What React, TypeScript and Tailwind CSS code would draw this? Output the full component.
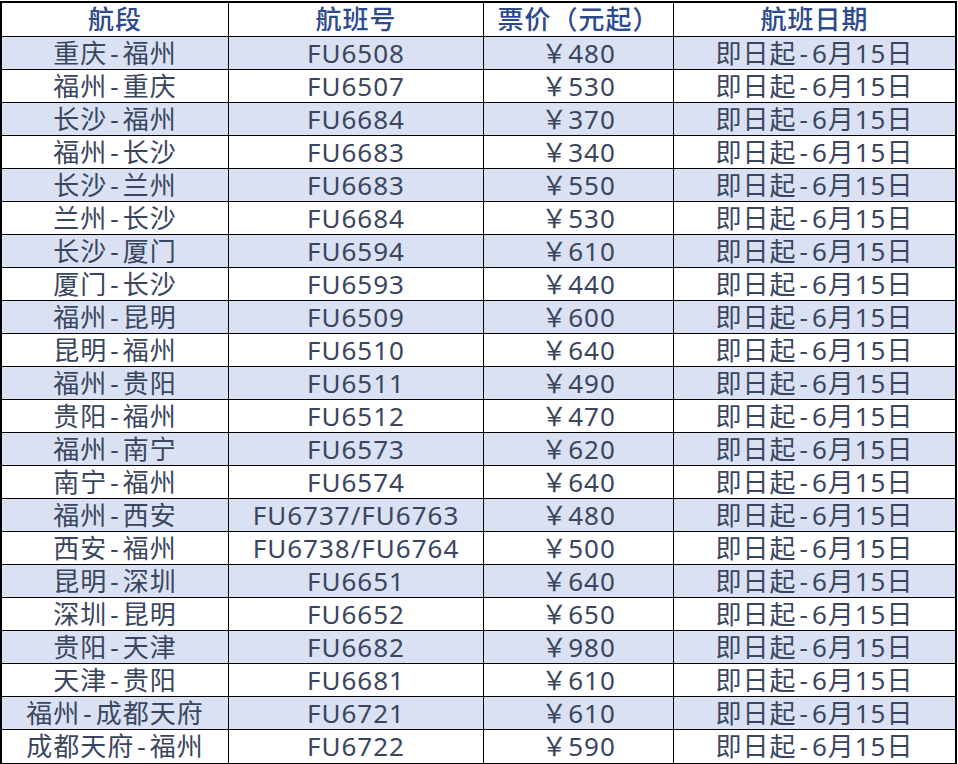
// Flight price table (Excel-style export)

type Row = { from: string; to: string; flight: string; price: string };

const rows: Row[] = [
  { from: '重庆', to: '福州', flight: 'FU6508', price: '480' },
  { from: '福州', to: '重庆', flight: 'FU6507', price: '530' },
  { from: '长沙', to: '福州', flight: 'FU6684', price: '370' },
  { from: '福州', to: '长沙', flight: 'FU6683', price: '340' },
  { from: '长沙', to: '兰州', flight: 'FU6683', price: '550' },
  { from: '兰州', to: '长沙', flight: 'FU6684', price: '530' },
  { from: '长沙', to: '厦门', flight: 'FU6594', price: '610' },
  { from: '厦门', to: '长沙', flight: 'FU6593', price: '440' },
  { from: '福州', to: '昆明', flight: 'FU6509', price: '600' },
  { from: '昆明', to: '福州', flight: 'FU6510', price: '640' },
  { from: '福州', to: '贵阳', flight: 'FU6511', price: '490' },
  { from: '贵阳', to: '福州', flight: 'FU6512', price: '470' },
  { from: '福州', to: '南宁', flight: 'FU6573', price: '620' },
  { from: '南宁', to: '福州', flight: 'FU6574', price: '640' },
  { from: '福州', to: '西安', flight: 'FU6737/FU6763', price: '480' },
  { from: '西安', to: '福州', flight: 'FU6738/FU6764', price: '500' },
  { from: '昆明', to: '深圳', flight: 'FU6651', price: '640' },
  { from: '深圳', to: '昆明', flight: 'FU6652', price: '650' },
  { from: '贵阳', to: '天津', flight: 'FU6682', price: '980' },
  { from: '天津', to: '贵阳', flight: 'FU6681', price: '610' },
  { from: '福州', to: '成都天府', flight: 'FU6721', price: '610' },
  { from: '成都天府', to: '福州', flight: 'FU6722', price: '590' },
];

const gridCols = 'grid grid-cols-[226px_255px_190px_282px]';

const Dash = () => <span className="mx-[3px]">-</span>;

export default function App() {
  return (
    <div
      className="bg-white pt-px text-[26px] tracking-[1px]"
      style={{ fontFamily: '"Noto Sans", "Noto Sans CJK SC", sans-serif' }}
    >
      <div className="w-[957px] border-2 border-black">
        {/* header */}
        <div className={`${gridCols} h-[34px] border-b border-black text-[#2c4a8e] font-medium leading-[33px]`}>
          <div className="text-center">航段</div>
          <div className="border-l border-black text-center">航班号</div>
          <div className="border-l border-black text-center">票价（元起）</div>
          <div className="border-l border-black text-center">航班日期</div>
        </div>

        {rows.map((r, i) => (
          <div
            key={i}
            className={`${gridCols} h-[33px] leading-[32px] text-[#3a4660] ${
              i < rows.length - 1 ? 'border-b border-black' : ''
            } ${i % 2 === 0 ? 'bg-[#d9e1f2]' : 'bg-white'}`}
          >
            <div className="text-center whitespace-nowrap">
              {r.from}
              <Dash />
              {r.to}
            </div>
            <div className="border-l border-black text-center whitespace-nowrap">{r.flight}</div>
            <div className="border-l border-black text-center whitespace-nowrap">￥{r.price}</div>
            <div className="border-l border-black text-center whitespace-nowrap">
              即日起
              <Dash />
              6月15日
            </div>
          </div>
        ))}
      </div>
    </div>
  );
}
